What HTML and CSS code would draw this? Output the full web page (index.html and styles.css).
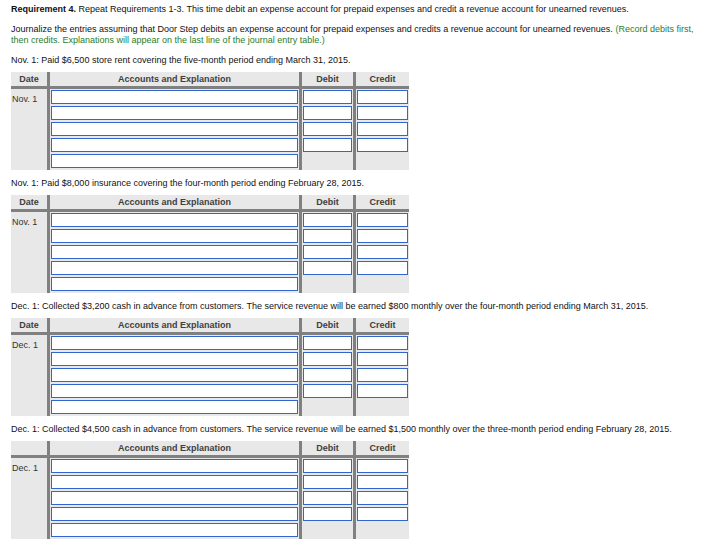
FILE: index.html
```html
<!DOCTYPE html>
<html lang="en">
<head>
<meta charset="utf-8">
<title>Requirement 4</title>
<link rel="stylesheet" href="styles.css">
</head>
<body>
<div class="page">
  <p class="intro"><b>Requirement 4.</b> Repeat Requirements 1-3. This time debit an expense account for prepaid expenses and credit a revenue account for unearned revenues.</p>
  <p class="intro">Journalize the entries assuming that Door Step debits an expense account for prepaid expenses and credits a revenue account for unearned revenues. <span class="hint">(Record debits first, then credits. Explanations will appear on the last line of the journal entry table.)</span></p>

  <section class="entry">
    <p class="desc">Nov. 1: Paid $6,500 store rent covering the five-month period ending March 31, 2015.</p>
    <div class="journal">
      <div class="jh">Date</div>
      <div class="jh sep">Accounts and Explanation</div>
      <div class="jh sep">Debit</div>
      <div class="jh sep">Credit</div>
      <div class="jd">Nov. 1</div>
      <div class="jc sep"><input class="box"><input class="box"><input class="box"><input class="box"><input class="box"></div>
      <div class="jc sep"><input class="box"><input class="box"><input class="box"><input class="box"></div>
      <div class="jc sep"><input class="box"><input class="box"><input class="box"><input class="box"></div>
    </div>
  </section>

  <section class="entry">
    <p class="desc">Nov. 1: Paid $8,000 insurance covering the four-month period ending February 28, 2015.</p>
    <div class="journal">
      <div class="jh">Date</div>
      <div class="jh sep">Accounts and Explanation</div>
      <div class="jh sep">Debit</div>
      <div class="jh sep">Credit</div>
      <div class="jd">Nov. 1</div>
      <div class="jc sep"><input class="box"><input class="box"><input class="box"><input class="box"><input class="box"></div>
      <div class="jc sep"><input class="box"><input class="box"><input class="box"><input class="box"></div>
      <div class="jc sep"><input class="box"><input class="box"><input class="box"><input class="box"></div>
    </div>
  </section>

  <section class="entry">
    <p class="desc">Dec. 1: Collected $3,200 cash in advance from customers. The service revenue will be earned $800 monthly over the four-month period ending March 31, 2015.</p>
    <div class="journal">
      <div class="jh">Date</div>
      <div class="jh sep">Accounts and Explanation</div>
      <div class="jh sep">Debit</div>
      <div class="jh sep">Credit</div>
      <div class="jd">Dec. 1</div>
      <div class="jc sep"><input class="box"><input class="box"><input class="box"><input class="box"><input class="box"></div>
      <div class="jc sep"><input class="box"><input class="box"><input class="box"><input class="box"></div>
      <div class="jc sep"><input class="box"><input class="box"><input class="box"><input class="box"></div>
    </div>
  </section>

  <section class="entry">
    <p class="desc">Dec. 1: Collected $4,500 cash in advance from customers. The service revenue will be earned $1,500 monthly over the three-month period ending February 28, 2015.</p>
    <div class="journal">
      <div class="jh"></div>
      <div class="jh sep">Accounts and Explanation</div>
      <div class="jh sep">Debit</div>
      <div class="jh sep">Credit</div>
      <div class="jd">Dec. 1</div>
      <div class="jc sep"><input class="box"><input class="box"><input class="box"><input class="box"><input class="box"></div>
      <div class="jc sep"><input class="box"><input class="box"><input class="box"><input class="box"></div>
      <div class="jc sep"><input class="box"><input class="box"><input class="box"><input class="box"></div>
    </div>
  </section>
</div>
</body>
</html>
```

FILE: styles.css
```css
html, body {
  margin: 0;
  padding: 0;
  background: #ffffff;
}

.page {
  padding: 4px 0 0 11px;
  width: 695px;
  font-family: "Liberation Sans", Arial, sans-serif;
  font-size: 9px;
  line-height: 11px;
  color: #111111;
}

p {
  margin: 0;
}

.intro {
  margin-bottom: 9px;
}

.hint {
  color: #2a7d2a;
}

.entry + .entry {
  margin-top: 8px;
}

.desc {
  margin-bottom: 6px;
  white-space: nowrap;
}

.journal {
  display: grid;
  grid-template-columns: 36px 252px 54px 56px;
  background: #e8e8e8;
  width: 398px;
}

.sep {
  border-left: 3px solid #808080;
}

.jh {
  height: 17px;
  box-sizing: border-box;
  padding-top: 1px;
  line-height: 13px;
  border-bottom: 3px solid #808080;
  text-align: center;
  font-weight: bold;
  color: #404040;
}

.jd {
  padding: 5px 0 0 1px;
  color: #333333;
}

.jc {
  display: flex;
  flex-direction: column;
  gap: 2px;
  padding: 1px 1px 2px 1px;
}

.box {
  display: block;
  box-sizing: border-box;
  width: 100%;
  height: 14px;
  margin: 0;
  padding: 0;
  border: 1px solid #3366cc;
  background: #ffffff;
  border-radius: 0;
  outline: none;
}
```
